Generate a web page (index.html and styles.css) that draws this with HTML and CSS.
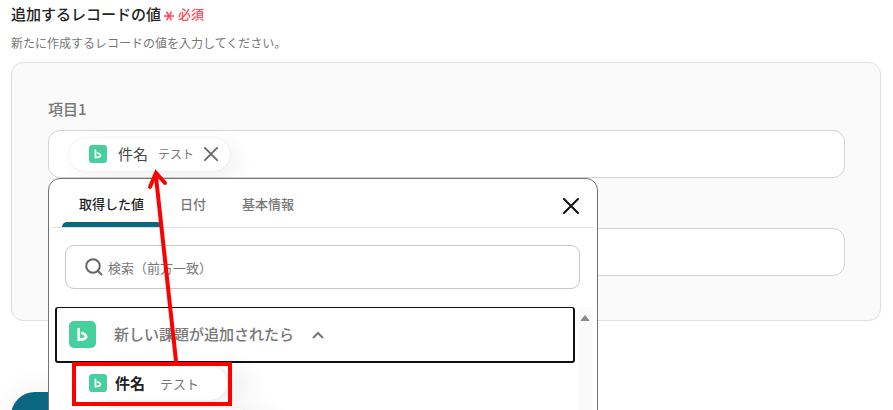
FILE: index.html
```
<!DOCTYPE html>
<html lang="ja">
<head>
	<meta charset="UTF-8">
	<title>追加するレコードの値</title>
	<link rel="stylesheet" href="styles.css">
</head>
<body>
	<svg class="sprite">
		<symbol id="logo" viewBox="0 0 27 27">
			<rect width="27" height="27" rx="5" fill="#45d09e"/>
			<path d="M9.700 8v11M9.700 18.600h2.300q4.800-.4 5.200-3.100q-.8-2.500-4.200-3.500" fill="none" stroke="#fff" stroke-width="2.600" stroke-linecap="round" stroke-linejoin="round"/>
		</symbol>
		<symbol id="cross" viewBox="0 0 16 16">
			<path d="M1 1l14 14M15 1L1 15" fill="none" stroke="currentColor" stroke-width="2" stroke-linecap="round"/>
		</symbol>
	</svg>

	<form class="record">
		<h1 class="title">追加するレコードの値
			<span class="required"><svg class="asterisk" viewBox="0 0 10 10"><path d="M0 5h10M2.500 .7l5 8.600M7.500 .7l-5 8.600"/></svg>必須</span>
		</h1>
		<p class="description">新たに作成するレコードの値を入力してください。</p>

		<div class="panel">
			<div class="item">
				<label class="label" for="item1">項目1</label>
				<div class="field">
					<span class="chip">
						<svg class="logo-s"><use href="#logo"/></svg>
						<span class="chip-name">件名</span>
						<span class="chip-value">テスト</span>
						<button type="button" class="chip-remove" aria-label="削除"><svg><use href="#cross"/></svg></button>
					</span>
					<input class="field-input" id="item1" type="text">

					<div class="popup">
						<div class="popup-head">
							<div class="tabs">
								<button type="button" class="tab active">取得した値</button>
								<button type="button" class="tab">日付</button>
								<button type="button" class="tab">基本情報</button>
							</div>
							<button type="button" class="close" aria-label="閉じる"><svg><use href="#cross"/></svg></button>
						</div>
						<div class="search">
							<svg class="search-icon" viewBox="0 0 18 18"><circle cx="8" cy="8" r="6.800"/><path d="M13 13l4 4"/></svg>
							<input class="search-input" type="search" placeholder="検索（前方一致）" aria-label="検索">
						</div>
						<div class="results">
							<div class="list">
								<button type="button" class="group">
									<svg class="logo-l"><use href="#logo"/></svg>
									<span class="group-name">新しい課題が追加されたら</span>
									<svg class="chevron" viewBox="0 0 12 8"><path d="M1 7l5-5 5 5"/></svg>
								</button>
								<button type="button" class="option">
									<svg class="logo-s"><use href="#logo"/></svg>
									<span class="option-name">件名</span>
									<span class="option-value">テスト</span>
								</button>
								<button type="button" class="option next" aria-label="次の項目"></button>
							</div>
							<div class="scrollbar">
								<svg viewBox="0 0 10 8"><path d="M5 1.500L1 6.500h8z"/></svg>
							</div>
						</div>
						<div class="mark"></div>
						<svg class="arrow" viewBox="0 0 30 194">
							<path d="M26 192L6 8"/>
							<path d="M0 18L6 4l9 10"/>
						</svg>
					</div>
				</div>
			</div>
			<div class="item">
				<label class="label" for="item2">項目2</label>
				<div class="field">
					<input class="field-input" id="item2" type="text">
				</div>
			</div>
		</div>

		<button type="button" class="save" aria-label="保存"></button>
	</form>
</body>
</html>
```
FILE: styles.css
```
*{
	box-sizing: border-box;
}

body{
	margin: 0;
	background-color: #fff;
	color: #222;
	font-family: "Noto Sans CJK JP", sans-serif;
	font-size: 15px;
}

button, input{
	font-family: inherit;
	border: 0;
	padding: 0;
	background: none;
	outline: none;
}

svg{
	flex-shrink: 0;
	display: block;
}

.sprite{
	position: absolute;
	width: 0;
	height: 0;
}

.record{
	height: 100vh;
	overflow: hidden;
	padding: 2px 12px 0 11px;
}

.title{
	display: flex;
	align-items: center;
	gap: 3px;
	margin: 0;
	font-size: 15px;
	font-weight: 500;
	line-height: 24px;
}

.required{
	display: flex;
	align-items: center;
	gap: 4px;
	color: #ff4757;
	font-size: 13px;
}

.asterisk{
	width: 10px;
	height: 10px;
	margin-top: 3px;
	fill: none;
	stroke: currentColor;
	stroke-width: 1.5;
}

.description{
	margin: 7px 0 9px;
	color: #777;
	font-size: 12px;
	line-height: 20px;
}

.panel{
	display: flex;
	flex-direction: column;
	gap: 17px;
	padding: 34px 35px 44px 36px;
	border: 1px solid #dddfe6;
	border-radius: 12px;
	background-color: #fafafa;
}

.label{
	display: block;
	margin-bottom: 9px;
	color: #777;
	font-weight: 500;
	line-height: 24px;
}

.field{
	position: relative;
	display: flex;
	align-items: center;
	height: 48px;
	padding: 0 20px;
	border: 1px solid #cfd3dc;
	border-radius: 12px;
	background-color: #fff;
}

.field-input{
	flex: 1;
	min-width: 0;
	height: 40px;
}

/* selected value */
.chip{
	display: flex;
	align-items: center;
	height: 33px;
	padding: 0 12px 0 20px;
	border-radius: 17px;
	background-color: #fff;
	box-shadow: 0 0 2px rgba(0,0,0,.1), 8px 6px 20px rgba(0,0,0,.06);
}

.logo-s{
	width: 18px;
	height: 18px;
}

.logo-l{
	width: 27px;
	height: 27px;
	margin-right: 18px;
}

.chip-name{
	margin: 0 10px 0 11px;
	padding-bottom: 2px;
	color: #444;
}

.chip-value{
	margin-right: 10px;
	padding-bottom: 2px;
	color: #777;
	font-size: 12px;
}

.chip-remove{
	color: #666;
}

.chip-remove svg{
	width: 14px;
	height: 14px;
}

/* value picker */
.popup{
	position: absolute;
	z-index: 1;
	top: 47px;
	left: -1px;
	width: 550px;
	height: 400px;
	padding: 0 4px 0 3px;
	border: 1px solid #747474;
	border-radius: 12px;
	background-color: #fff;
}

.popup-head{
	display: flex;
	align-items: center;
	justify-content: space-between;
	height: 49px;
	padding: 0 14px 0 10px;
	border-bottom: 1px solid #e0e0e4;
}

.tabs{
	display: flex;
	align-self: stretch;
}

.tab{
	padding: 5px 18px 0;
	border-bottom: 5px solid transparent;
	color: #777;
	font-size: 13px;
	font-weight: 500;
}

.tab.active{
	padding-left: 17px;
	position: relative;
	color: #222;
}

.tab.active::after{
	content: "";
	position: absolute;
	left: 0;
	right: 0;
	bottom: -5px;
	height: 5px;
	border-radius: 5px 5px 0 0;
	background-color: #0b6781;
}

.close{
	padding-top: 6px;
	color: #111;
}

.close svg{
	width: 16px;
	height: 16px;
}

.search{
	display: flex;
	align-items: center;
	gap: 5px;
	height: 44px;
	margin: 17px 13px 18px;
	padding: 0 19px;
	border: 1px solid #c8c8c8;
	border-radius: 9px;
}

.search-icon{
	width: 18px;
	height: 18px;
	fill: none;
	stroke: #666;
	stroke-width: 2;
}

.search-input{
	flex: 1;
	font-size: 13px;
}

.search-input::placeholder{
	color: #777;
	opacity: 1;
}

.results{
	display: flex;
	gap: 3px;
	height: 260px;
	padding-left: 3px;
}

.list{
	flex: 1;
}

.group{
	display: flex;
	align-items: center;
	width: 100%;
	height: 56px;
	padding: 0 12px;
	border: 2px solid #111;
	border-top-width: 1px;
	border-radius: 3px;
}

.group-name{
	padding-bottom: 2px;
	color: #777;
	font-size: 15px;
	font-weight: 500;
}

.chevron{
	width: 12px;
	height: 8px;
	margin: 1px 0 0 18px;
	fill: none;
	stroke: #777;
	stroke-width: 2;
}

.option{
	display: flex;
	align-items: center;
	width: 152px;
	height: 34px;
	margin: 3px 0 8px 20px;
	padding-left: 14px;
	border-radius: 18px;
	box-shadow: 0 0 2px rgba(0,0,0,.1), 24px 2px 22px rgba(0,0,0,.06);
}

.option.next{
	width: 178px;
}

.option-name{
	margin: 0 15px 0 8px;
	padding-bottom: 2px;
	color: #222;
	font-size: 15px;
	font-weight: 700;
}

.option-value{
	color: #777;
	font-size: 13px;
}

.scrollbar{
	width: 15px;
	padding: 7px 2px;
	background-color: #fafafa;
}

.scrollbar svg{
	width: 10px;
	height: 8px;
	fill: #8b8b8b;
	stroke: #8b8b8b;
	stroke-linejoin: round;
}

/* annotation drawn over the picker */
.mark{
	position: absolute;
	top: 183px;
	left: 23px;
	width: 160px;
	height: 44px;
	border: 4px solid #f00;
}

.arrow{
	position: absolute;
	top: -10px;
	left: 101px;
	width: 30px;
	height: 194px;
	overflow: visible;
	fill: none;
	stroke: #f00;
	stroke-width: 4;
	stroke-linecap: round;
}

.save{
	display: block;
	width: 160px;
	height: 48px;
	margin-top: 71px;
	border-radius: 24px;
	background-color: #0b6781;
	box-shadow: 0 0 30px rgba(0,0,0,.08);
}
```
